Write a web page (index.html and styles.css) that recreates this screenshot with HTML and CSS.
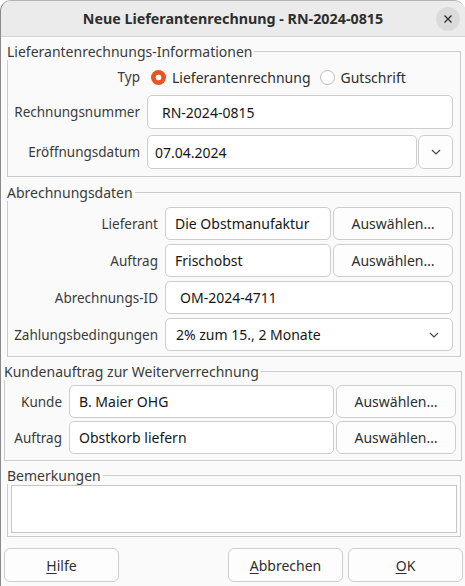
FILE: index.html
```html
<!DOCTYPE html>
<html lang="de">
<head>
<meta charset="utf-8">
<title>Neue Lieferantenrechnung</title>
<link rel="stylesheet" href="styles.css">
</head>
<body>
<div class="window">
  <header class="titlebar">
    <h1 class="title">Neue Lieferantenrechnung - RN-2024-0815</h1>
    <button class="close" aria-label="Schließen">
      <svg width="10" height="10" viewBox="0 0 10 10"><path d="M1.5 1.5 L8.5 8.5 M8.5 1.5 L1.5 8.5" stroke="#2e2e2e" stroke-width="1.3" fill="none"/></svg>
    </button>
  </header>

  <main class="content">
    <fieldset class="group g-info">
      <legend>Lieferantenrechnungs-Informationen</legend>
      <div class="form form-info">
        <span class="label">Typ</span>
        <div class="radios">
          <label class="radio"><span class="dot checked"></span>Lieferantenrechnung</label>
          <label class="radio"><span class="dot"></span>Gutschrift</label>
        </div>
        <span class="label">Rechnungsnummer</span>
        <div class="entry tall pad-wide">RN-2024-0815</div>
        <span class="label">Eröffnungsdatum</span>
        <div class="field tight">
          <div class="entry tall pad-narrow">07.04.2024</div>
          <button class="btn drop tall" aria-label="Datum wählen">
            <svg width="10" height="6" viewBox="0 0 10 6"><path d="M1 1 L5 5 L9 1" stroke="#444" stroke-width="1.1" fill="none"/></svg>
          </button>
        </div>
      </div>
    </fieldset>

    <fieldset class="group g-billing">
      <legend>Abrechnungsdaten</legend>
      <div class="form form-billing">
        <span class="label">Lieferant</span>
        <div class="field">
          <div class="entry">Die Obstmanufaktur</div>
          <button class="btn pick">Auswählen…</button>
        </div>
        <span class="label">Auftrag</span>
        <div class="field">
          <div class="entry">Frischobst</div>
          <button class="btn pick">Auswählen…</button>
        </div>
        <span class="label">Abrechnungs-ID</span>
        <div class="entry pad-wide">OM-2024-4711</div>
        <span class="label">Zahlungsbedingungen</span>
        <div class="entry combo">
          <span>2% zum 15., 2 Monate</span>
          <svg width="10" height="6" viewBox="0 0 10 6"><path d="M1 1 L5 5 L9 1" stroke="#444" stroke-width="1.1" fill="none"/></svg>
        </div>
      </div>
    </fieldset>

    <fieldset class="group g-customer">
      <legend>Kundenauftrag zur Weiterverrechnung</legend>
      <div class="form form-customer">
        <span class="label">Kunde</span>
        <div class="field">
          <div class="entry">B. Maier OHG</div>
          <button class="btn pick">Auswählen…</button>
        </div>
        <span class="label">Auftrag</span>
        <div class="field">
          <div class="entry">Obstkorb liefern</div>
          <button class="btn pick">Auswählen…</button>
        </div>
      </div>
    </fieldset>

    <fieldset class="group g-notes">
      <legend>Bemerkungen</legend>
      <div class="notes"></div>
    </fieldset>
  </main>

  <footer class="actions">
    <button class="btn action"><u>H</u>ilfe</button>
    <button class="btn action push"><u>A</u>bbrechen</button>
    <button class="btn action"><u>O</u>K</button>
  </footer>
</div>
</body>
</html>
```

FILE: styles.css
```css
* { box-sizing: border-box; }

html, body {
  margin: 0;
  padding: 0;
  background: #ffffff;
}

body {
  font-family: "Noto Sans", "DejaVu Sans", sans-serif;
  font-size: 14px;
  color: #3a3a3a;
}

.window {
  width: 465px;
  height: 586px;
  background: #fafafa;
  border-left: 1px solid #8a8a8a;
  border-top: 1px solid #b5b5b5;
  border-radius: 11px 11px 0 0;
  overflow: hidden;
  display: flex;
  flex-direction: column;
}

.titlebar {
  height: 36px;
  flex: none;
  background: #ebebeb;
  border-bottom: 1px solid #d4d4d4;
  display: flex;
  align-items: center;
  justify-content: center;
  position: relative;
}

.title {
  margin: 0;
  font-size: 14.3px;
  font-weight: 700;
  color: #2e2e2e;
}

.close {
  position: absolute;
  right: 5px;
  top: 6px;
  width: 24px;
  height: 24px;
  border-radius: 50%;
  border: none;
  background: #dadada;
  padding: 0;
  display: flex;
  align-items: center;
  justify-content: center;
}

.content {
  display: flex;
  flex-direction: column;
}

.group {
  border: 1px solid #cbcbcb;
  margin: 7px 4px 0 6px;
  padding: 0;
  min-width: 0;
}

.group legend {
  padding: 0 2px 0 0;
  margin-left: -1px;
  line-height: 17px;
  color: #3a3a3a;
}

.g-info { margin-top: 6px; }
.g-customer { margin: 6px 3px 0 3px; }
.g-notes { margin-top: 6px; }

.form {
  display: grid;
  column-gap: 7px;
  align-items: center;
}

.form-info {
  grid-template-columns: 126px 1fr;
  grid-template-rows: 24px 34px 34px;
  padding: 5px 7px 7px 6px;
  row-gap: 6px;
}

.form-billing {
  grid-template-columns: 144px 1fr;
  padding: 6px 7px 5px 6px;
  row-gap: 4px;
}

.form-customer {
  grid-template-columns: 50px 1fr;
  padding: 5px 5px 6px 7px;
  row-gap: 3px;
}

.label {
  font-size: 13.5px;
  text-align: right;
  color: #3a3a3a;
  white-space: nowrap;
}

.radios {
  display: flex;
  align-items: center;
  padding-left: 4px;
}

.radio {
  display: flex;
  align-items: center;
  gap: 6px;
  margin-right: 9px;
  color: #2e2e2e;
}

.dot {
  width: 15px;
  height: 15px;
  border-radius: 50%;
  border: 1px solid #bdbdbd;
  background: #ffffff;
  flex: none;
}

.dot.checked {
  border: none;
  background: radial-gradient(circle, #ffffff 0 2.6px, #e95420 3.2px);
}

.field {
  display: flex;
  gap: 2px;
  min-width: 0;
}

.field.tight { gap: 1px; }

.field .entry { flex: 1; }

.entry {
  height: 33px;
  background: #ffffff;
  border: 1px solid #cdcdcd;
  border-radius: 5px;
  display: flex;
  align-items: center;
  padding: 0 9px;
  color: #161616;
  white-space: nowrap;
  min-width: 0;
}

.entry.tall, .btn.tall { height: 34px; }
.entry.pad-wide { padding-left: 14px; }
.entry.pad-narrow { padding-left: 7px; }

.combo {
  justify-content: space-between;
  padding: 0 13px 0 10px;
}

.btn {
  font: inherit;
  height: 33px;
  background: #fdfdfd;
  border: 1px solid #cdcdcd;
  border-radius: 6px;
  color: #2e2e2e;
  padding: 0;
  display: flex;
  align-items: center;
  justify-content: center;
}

.btn.pick { width: 120px; flex: none; }

.btn.drop { width: 35px; flex: none; }

.notes {
  height: 48px;
  margin: 1px 3px 3px 3px;
  background: #ffffff;
  border: 1px solid #c6c6c6;
}

.actions {
  display: flex;
  gap: 5px;
  padding: 11px 2px 0 3px;
}

.btn.action {
  width: 115px;
  height: 34px;
}

.btn.push { margin-left: auto; }

.btn u { text-decoration-thickness: 1px; text-underline-offset: 2px; }
```
